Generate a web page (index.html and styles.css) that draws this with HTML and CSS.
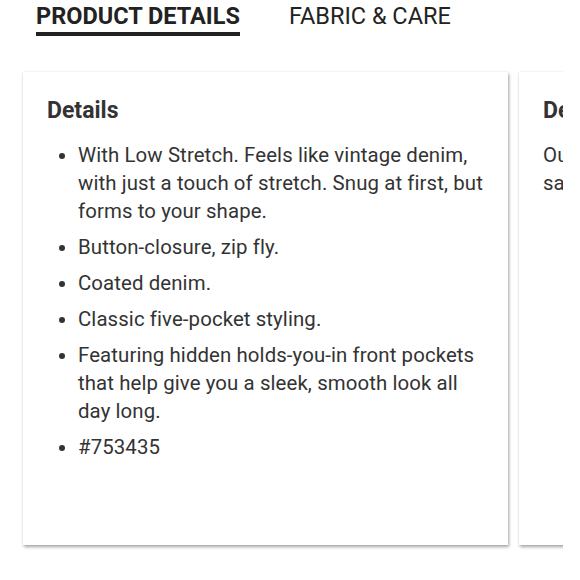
FILE: index.html
```html
<!DOCTYPE html>
<html>
<head>
<meta charset="utf-8">
<link rel="stylesheet" href="styles.css">
</head>
<body>
<div class="tabs">
  <div class="tab active">PRODUCT DETAILS</div>
  <div class="tab">FABRIC &amp; CARE</div>
</div>
<div class="cards">
  <div class="card">
    <h2 class="card-title">Details</h2>
    <ul class="list">
      <li>With Low Stretch. Feels like vintage denim, with just a touch of stretch. Snug at first, but forms to your shape.</li>
      <li>Button-closure, zip fly.</li>
      <li>Coated denim.</li>
      <li>Classic five-pocket styling.</li>
      <li>Featuring hidden holds-you-in front pockets that help give you a sleek, smooth look all day long.</li>
      <li>#753435</li>
    </ul>
  </div>
  <div class="card">
    <h2 class="card-title">Description</h2>
    <p class="desc">Our iconic skinny jeans, now in a coated denim with the<br>same great fit you love.</p>
  </div>
</div>
</body>
</html>
```

FILE: styles.css
```css
* { box-sizing: border-box; }
body {
  margin: 0;
  font-family: Roboto, "Liberation Sans", sans-serif;
  color: #333;
  background: #fff;
  width: 580px;
  height: 580px;
  overflow: hidden;
}
.tabs {
  display: flex;
  gap: 49px;
  padding-left: 36px;
  padding-top: 2px;
}
.tab {
  font-size: 23.5px;
  line-height: 28px;
  color: #222;
  padding-bottom: 2px;
  border-bottom: 4px solid transparent;
}
.tab.active {
  font-weight: 700;
  border-bottom-color: #222;
}
.cards {
  display: flex;
  gap: 11px;
  width: 563px;
  overflow: hidden;
  padding: 36px 0 30px 23px;
}
.card {
  flex: 0 0 485px;
  height: 473px;
  background: #fff;
  box-shadow: 1px 2px 3px rgba(0,0,0,0.35), 0 0 2px rgba(0,0,0,0.08);
  padding: 24px 24px;
}
.card-title {
  margin: 0 0 17px;
  padding-top: 1px;
  font-size: 23px;
  line-height: 28px;
  font-weight: 700;
  color: #333;
}
.list {
  margin: 0;
  margin-top: -1px;
  padding-left: 31px;
  font-size: 20.4px;
  letter-spacing: 0.1px;
  line-height: 28px;
  color: #333;
}
.list li {
  margin-bottom: 8px;
}
.desc {
  margin: 0;
  margin-top: -1px;
  font-size: 20.4px;
  letter-spacing: 0.1px;
  line-height: 28px;
  white-space: nowrap;
}
```
